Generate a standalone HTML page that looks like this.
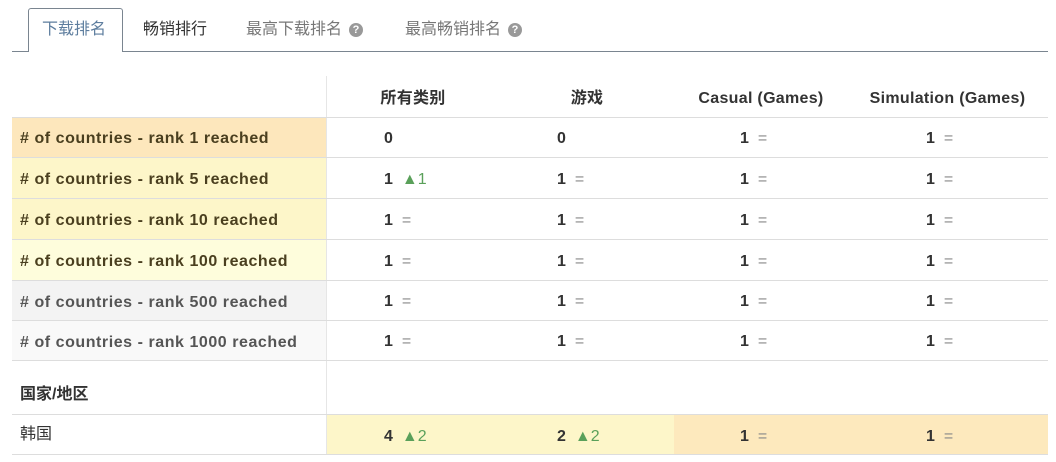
<!DOCTYPE html>
<html><head><meta charset="utf-8"><style>
*{margin:0;padding:0;box-sizing:border-box}
body{width:1056px;height:462px;background:#fff;position:relative;overflow:hidden;font-family:"Liberation Sans","Noto Sans CJK SC",sans-serif;color:#333}
.a{position:absolute}
.tab{position:absolute;top:8px;height:44px;line-height:44px;font-size:16px}
.q{display:inline-block;width:14px;height:14px;border-radius:50%;background:#999;color:#fff;font-size:11px;line-height:14px;text-align:center;font-weight:bold;vertical-align:1px;margin-left:7px}
.hl{position:absolute;left:12px;width:1036px;height:1px;background:#ddd}
.lab{position:absolute;left:12px;width:314px;font-size:16px;font-weight:bold;padding-left:8px;color:#4a3f1f;letter-spacing:0.55px;padding-top:2px}
.v{position:absolute;font-size:16px;font-weight:bold;color:#333;padding-top:2px}
.eq{color:#888;font-weight:normal;margin-left:9px}
.up{color:#5aa05a;font-weight:normal;margin-left:9px}
.h{position:absolute;top:78px;height:41px;line-height:41px;font-size:16px;font-weight:bold;text-align:center;color:#333;letter-spacing:0.3px}
</style></head><body>
<div class="a" style="left:12px;top:51px;width:1036px;height:1px;background:#7a8590"></div>
<div class="a" style="left:28px;top:8px;width:95px;height:44px;border:1px solid #7a8590;border-bottom:none;background:#fff;border-radius:3px 3px 0 0"></div>
<div class="tab" style="left:42px;color:#5d7d9e">下载排名</div>
<div class="tab" style="left:143px;color:#333">畅销排行</div>
<div class="tab" style="left:246px;color:#777">最高下载排名<span class="q">?</span></div>
<div class="tab" style="left:405px;color:#777">最高畅销排名<span class="q">?</span></div>

<div class="a" style="left:326px;top:76px;width:1px;height:378px;background:#e6e6e6"></div>
<div class="h" style="left:340px;width:146px">所有类别</div>
<div class="h" style="left:530px;width:114px">游戏</div>
<div class="h" style="left:680px;width:162px">Casual (Games)</div>
<div class="h" style="left:850px;width:195px">Simulation (Games)</div>

<div class="lab" style="top:117px;height:40px;line-height:40px;background:#fde7bc"># of countries - rank 1 reached</div>
<div class="lab" style="top:158px;height:40px;line-height:40px;background:#fdf6c9"># of countries - rank 5 reached</div>
<div class="lab" style="top:199px;height:40px;line-height:40px;background:#fdf6c9"># of countries - rank 10 reached</div>
<div class="lab" style="top:240px;height:40px;line-height:40px;background:#fefddc"># of countries - rank 100 reached</div>
<div class="lab" style="top:281px;height:39px;line-height:39px;background:#f3f3f3;color:#555"># of countries - rank 500 reached</div>
<div class="lab" style="top:321px;height:39px;line-height:39px;background:#f9f9f9;color:#555"># of countries - rank 1000 reached</div>

<div class="hl" style="top:117px"></div><div class="hl" style="top:157px"></div><div class="hl" style="top:198px"></div><div class="hl" style="top:239px"></div><div class="hl" style="top:280px"></div><div class="hl" style="top:320px"></div><div class="hl" style="top:360px"></div><div class="hl" style="top:414px"></div>

<div class="v" style="top:117px;line-height:40px;left:384px">0</div>
<div class="v" style="top:117px;line-height:40px;left:557px">0</div>
<div class="v" style="top:117px;line-height:40px;left:740px">1<span class="eq">=</span></div>
<div class="v" style="top:117px;line-height:40px;left:926px">1<span class="eq">=</span></div>

<div class="v" style="top:158px;line-height:40px;left:384px">1<span class="up">▲1</span></div>
<div class="v" style="top:158px;line-height:40px;left:557px">1<span class="eq">=</span></div>
<div class="v" style="top:158px;line-height:40px;left:740px">1<span class="eq">=</span></div>
<div class="v" style="top:158px;line-height:40px;left:926px">1<span class="eq">=</span></div>

<div class="v" style="top:199px;line-height:40px;left:384px">1<span class="eq">=</span></div>
<div class="v" style="top:199px;line-height:40px;left:557px">1<span class="eq">=</span></div>
<div class="v" style="top:199px;line-height:40px;left:740px">1<span class="eq">=</span></div>
<div class="v" style="top:199px;line-height:40px;left:926px">1<span class="eq">=</span></div>

<div class="v" style="top:240px;line-height:40px;left:384px">1<span class="eq">=</span></div>
<div class="v" style="top:240px;line-height:40px;left:557px">1<span class="eq">=</span></div>
<div class="v" style="top:240px;line-height:40px;left:740px">1<span class="eq">=</span></div>
<div class="v" style="top:240px;line-height:40px;left:926px">1<span class="eq">=</span></div>

<div class="v" style="top:280px;line-height:40px;left:384px">1<span class="eq">=</span></div>
<div class="v" style="top:280px;line-height:40px;left:557px">1<span class="eq">=</span></div>
<div class="v" style="top:280px;line-height:40px;left:740px">1<span class="eq">=</span></div>
<div class="v" style="top:280px;line-height:40px;left:926px">1<span class="eq">=</span></div>

<div class="v" style="top:320px;line-height:40px;left:384px">1<span class="eq">=</span></div>
<div class="v" style="top:320px;line-height:40px;left:557px">1<span class="eq">=</span></div>
<div class="v" style="top:320px;line-height:40px;left:740px">1<span class="eq">=</span></div>
<div class="v" style="top:320px;line-height:40px;left:926px">1<span class="eq">=</span></div>

<div class="a" style="left:20px;top:368px;line-height:53px;font-size:16px;font-weight:bold;color:#333">国家/地区</div>

<div class="a" style="left:327px;top:415px;width:347px;height:39px;background:#fdf6c9"></div>
<div class="a" style="left:674px;top:415px;width:374px;height:39px;background:#fde9bd"></div>
<div class="a" style="left:20px;top:415px;line-height:39px;font-size:16px;color:#333">韩国</div>
<div class="v" style="top:415px;line-height:39px;left:384px">4<span class="up">▲2</span></div>
<div class="v" style="top:415px;line-height:39px;left:557px">2<span class="up">▲2</span></div>
<div class="v" style="top:415px;line-height:39px;left:740px">1<span class="eq">=</span></div>
<div class="v" style="top:415px;line-height:39px;left:926px">1<span class="eq">=</span></div>
<div class="hl" style="top:454px"></div>
</body></html>
